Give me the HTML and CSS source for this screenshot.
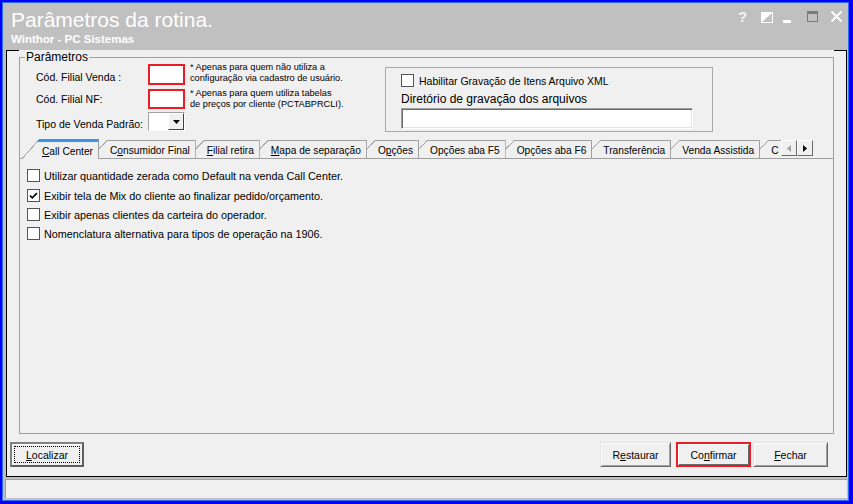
FILE: index.html
```html
<!DOCTYPE html>
<html lang="pt-BR">
<head>
  <meta charset="UTF-8" />
  <title>Parâmetros da rotina</title>
  <link rel="stylesheet" href="styles.css">
</head>
<body>

<div class="window">

  <!-- Barra de título -->
  <div class="titlebar">
    <div class="titles">
      <div class="title">Parâmetros da rotina.</div>
      <div class="subtitle">Winthor - PC Sistemas</div>
    </div>
    <div class="winbtns">
      <span class="wb help">?</span>
      <svg class="wb skin" width="12" height="11" viewBox="0 0 12 11"><rect x="0.5" y="0.5" width="11" height="10" fill="none" stroke="#fff"/><polygon points="1,1 11,1 1,10" fill="#fff"/></svg>
      <svg class="wb min" width="9" height="11" viewBox="0 0 9 11"><rect x="0" y="8" width="8" height="3" fill="#fff"/></svg>
      <svg class="wb max" width="11" height="11" viewBox="0 0 11 11"><rect x="0.5" y="0.5" width="10" height="10" fill="none" stroke="#7a7a7a"/><rect x="0" y="0" width="11" height="3" fill="#7a7a7a"/></svg>
      <svg class="wb close" width="13" height="11" viewBox="0 0 13 11"><path d="M1.5 0.5 L11.5 10.5 M11.5 0.5 L1.5 10.5" stroke="#fff" stroke-width="2"/></svg>
    </div>
  </div>

  <!-- Painel principal -->
  <div class="panel">
    <div class="groupwrap">
      <fieldset class="group">
        <legend>Parâmetros</legend>

        <div class="top">
          <div class="fields">
            <div class="row r1">
              <span class="lbl">Cód. Filial Venda :</span>
              <span class="redbox"></span>
              <span class="note n1">* Apenas para quem não utiliza a<br>configuração via cadastro de usuário.</span>
            </div>
            <div class="row r2">
              <span class="lbl">Cód. Filial NF:</span>
              <span class="redbox"></span>
              <span class="note n2">* Apenas para quem utiliza tabelas<br>de preços por cliente (PCTABPRCLI).</span>
            </div>
            <div class="row r3">
              <span class="lbl">Tipo de Venda Padrão:</span>
              <span class="combo">
                <span class="combo-btn">
                  <svg width="7" height="4" viewBox="0 0 7 4"><polygon points="0,0 7,0 3.5,4" fill="#000"/></svg>
                </span>
              </span>
            </div>
          </div>

          <div class="xmlbox">
            <div class="xml-chk"><span class="chk"></span>Habilitar Gravação de Itens Arquivo XML</div>
            <div class="dir-lbl">Diretório de gravação dos arquivos</div>
            <div class="textbox"></div>
          </div>
        </div>

        <!-- Abas -->
        <div class="tabstrip">
          <div class="tabs">
            <span class="tab active"><u>C</u>all Center</span>
            <span class="tab">C<u>o</u>nsumidor Final</span>
            <span class="tab"><u>F</u>ilial retira</span>
            <span class="tab"><u>M</u>apa de separação</span>
            <span class="tab">O<u>p</u>ções</span>
            <span class="tab">Opções aba F5</span>
            <span class="tab">Opções aba F6</span>
            <span class="tab">Transferência</span>
            <span class="tab">Venda Assistida</span>
            <span class="tab">C</span>
          </div>
          <div class="scroller">
            <span class="sbtn"><svg width="4" height="7" viewBox="0 0 4 7"><polygon points="4,0 4,7 0,3.5" fill="#a0a0a0"/></svg></span>
            <span class="sbtn"><svg width="4" height="7" viewBox="0 0 4 7"><polygon points="0,0 0,7 4,3.5" fill="#000"/></svg></span>
          </div>
        </div>

        <div class="tabpage">
          <div class="chk-row"><span class="chk"></span>Utilizar quantidade zerada como Default na venda Call Center.</div>
          <div class="chk-row"><span class="chk checked"><svg width="11" height="11" viewBox="0 0 11 11"><path d="M2 5.5 L4.3 7.8 L9 3" fill="none" stroke="#000" stroke-width="1.7"/></svg></span>Exibir tela de Mix do cliente ao finalizar pedido/orçamento.</div>
          <div class="chk-row"><span class="chk"></span>Exibir apenas clientes da carteira do operador.</div>
          <div class="chk-row"><span class="chk"></span>Nomenclatura alternativa para tipos de operação na 1906.</div>
        </div>
      </fieldset>
    </div>

    <!-- Botões -->
    <div class="actions">
      <button class="btn btn-default"><span class="focus"><u>L</u>ocalizar</span></button>
      <div class="actions-right">
        <button class="btn btn-restaurar">R<u>e</u>staurar</button>
        <button class="btn btn-confirmar">Co<u>n</u>firmar</button>
        <button class="btn btn-fechar"><u>F</u>echar</button>
      </div>
    </div>
  </div>

  <div class="statusbar"></div>
</div>

</body>
</html>
```

FILE: styles.css
```css
html, body {
  margin: 0;
  padding: 0;
  width: 853px;
  height: 504px;
  overflow: hidden;
  font-family: "Liberation Sans", Arial, sans-serif;
  font-size: 10.5px;
  color: #000;
  background: #c0c0c0;
}

.window {
  width: 853px;
  height: 504px;
  box-sizing: border-box;
  border-style: solid;
  border-color: #0000f6;
  border-width: 2px 4px 3px 2px;
  background: #c0c0c0;
  box-shadow: inset 1px 1px 0 #2f6cff, inset -1px -1px 0 #2f6cff;
  display: flex;
  flex-direction: column;
}

/* Barra de título */
.titlebar {
  height: 48px;
  flex: none;
  display: flex;
  justify-content: space-between;
  padding: 0 6px 0 9px;
  color: #fff;
}

.titles {
  padding-top: 6px;
}

.title {
  font-size: 21px;
  line-height: 24px;
}

.subtitle {
  font-weight: bold;
  font-size: 11.5px;
  line-height: 14px;
}

.winbtns {
  display: flex;
  align-items: flex-start;
  padding-top: 9px;
}

.wb {
  display: block;
}

.help {
  font-weight: bold;
  font-size: 15px;
  line-height: 12px;
  width: 9px;
  color: #f4f4f4;
}

.skin { margin-left: 14px; margin-top: 1px; }
.min { margin-left: 10px; margin-top: 1px; }
.max { margin-left: 15px; }
.close { margin-left: 12px; }

/* Painel */
.panel {
  flex: none;
  height: 427px;
  box-sizing: border-box;
  margin: 0 2px 0 4px;
  border: 1px solid #000;
  background: #f0f0f0;
}

.groupwrap {
  margin: -1px 12px 0 12px;
  background: #f0f0f0;
}

.group {
  margin: 0;
  padding: 0;
  min-width: 0;
  border: 1px solid #a0a0a0;
}

.group legend {
  margin-left: 5px;
  padding: 0 1px;
  font-size: 12px;
  line-height: 14px;
}

.top {
  height: 68px;
  display: flex;
  padding-left: 16px;
}

.fields {
  width: 349px;
  flex: none;
}

.row {
  display: flex;
  align-items: center;
}

.r1 { height: 21px; }
.r2 { height: 20px; margin-top: 4px; }
.r3 { height: 19px; margin-top: 3px; }

.lbl {
  width: 112px;
  flex: none;
  line-height: 13px;
}

.r1 .lbl { padding-top: 6px; }
.r3 .lbl { padding-top: 5px; }

.redbox {
  width: 37px;
  height: 100%;
  box-sizing: border-box;
  border: 2px solid #ec1c24;
  background: #fff;
  flex: none;
}

.note {
  align-self: flex-start;
  margin-left: 5px;
  font-size: 9.2px;
  line-height: 11px;
  white-space: nowrap;
}

.n1 { margin-top: -2px; }
.n2 { margin-top: -1px; }

.combo {
  width: 37px;
  height: 19px;
  box-sizing: border-box;
  border: 1px solid;
  border-color: #a0a0a0 #fff #fff #a0a0a0;
  background: #fff;
  display: flex;
  justify-content: flex-end;
}

.combo-btn {
  width: 16px;
  box-sizing: border-box;
  border: 1px solid;
  border-color: #fff #404040 #404040 #fff;
  background: #f0f0f0;
  display: flex;
  align-items: center;
  justify-content: center;
}

.combo-btn svg { display: block; }

.xmlbox {
  margin: 3px 0 0 0;
  width: 328px;
  height: 65px;
  box-sizing: border-box;
  border: 1px solid #a9a9a9;
  padding: 6px 0 0 15px;
}

.xml-chk {
  display: flex;
  align-items: center;
  height: 13px;
}

.xml-chk .chk { margin-right: 5px; }

.dir-lbl {
  margin-top: 5px;
  font-size: 12px;
  line-height: 14px;
}

.textbox {
  margin-top: 2px;
  width: 292px;
  height: 21px;
  box-sizing: border-box;
  border: 1px solid;
  border-color: #a0a0a0 #fff #fff #a0a0a0;
  box-shadow: inset 1px 1px 0 #696969, inset -1px -1px 0 #e3e3e3;
  background: #fff;
}

/* Abas */
.tabstrip {
  margin-top: 7px;
  height: 20px;
  display: flex;
  background: linear-gradient(#a0a0a0, #a0a0a0) 0 19px / 100% 1px no-repeat;
}

.tabs {
  width: 761px;
  height: 20px;
  flex: none;
  display: flex;
  align-items: flex-end;
  overflow: hidden;
  font-size: 10.2px;
}

.tab {
  position: relative;
  flex: none;
  height: 18px;
  box-sizing: border-box;
  margin: 0 0 1px -10px;
  padding: 3px 5px 0 21px;
  border-top: 1px solid #a0a0a0;
  border-right: 1px solid #a0a0a0;
  line-height: 13px;
  white-space: nowrap;
  background: linear-gradient(to bottom right, transparent 50%, #a0a0a0 50%, #a0a0a0 calc(50% + 1px), #f0f0f0 calc(50% + 1px)) 0 0 / 18px 18px no-repeat border-box, #f0f0f0;
  clip-path: polygon(0 100%, 18px 0, 100% 0, 100% 100%);
}

.tab:nth-child(2) { z-index: 9; }
.tab:nth-child(3) { z-index: 8; }
.tab:nth-child(4) { z-index: 7; }
.tab:nth-child(5) { z-index: 6; }
.tab:nth-child(6) { z-index: 5; }
.tab:nth-child(7) { z-index: 4; }
.tab:nth-child(8) { z-index: 3; }
.tab:nth-child(9) { z-index: 2; }
.tab:nth-child(10) { z-index: 1; }

.tab.active {
  z-index: 10;
  height: 20px;
  margin: 0 0 0 1px;
  padding-top: 3px;
  border-top: 3px solid #3c94ee;
  background: linear-gradient(to bottom right, transparent 50%, #a0a0a0 50%, #a0a0a0 calc(50% + 1px), #f0f0f0 calc(50% + 1px)) 0 0 / 18px 20px no-repeat border-box, #f0f0f0;
}

.scroller {
  display: flex;
  align-self: flex-start;
  margin-top: 1px;
}

.sbtn {
  width: 16px;
  height: 16px;
  box-sizing: border-box;
  border: 1px solid;
  border-color: #fff #696969 #696969 #fff;
  background: #f0f0f0;
  display: flex;
  align-items: center;
  justify-content: center;
}

.sbtn svg { display: block; }

.tabpage {
  height: 274px;
  box-sizing: border-box;
  padding: 10px 0 0 7px;
  font-size: 10.8px;
}

.chk-row {
  display: flex;
  align-items: center;
  height: 13px;
  margin-bottom: 6px;
}

.chk-row:first-child { margin-bottom: 7px; }

.chk-row .chk { margin-right: 4px; }

.chk {
  width: 13px;
  height: 13px;
  box-sizing: border-box;
  border: 1px solid #555;
  background: #fff;
  flex: none;
  display: flex;
  align-items: center;
  justify-content: center;
}

.chk svg { display: block; }

/* Botões */
.actions {
  margin-top: 8px;
  display: flex;
  justify-content: space-between;
  padding: 0 18px 0 3px;
}

.actions-right {
  display: flex;
}

.btn {
  height: 25px;
  box-sizing: border-box;
  margin: 0;
  padding: 0;
  font-family: "Liberation Sans", Arial, sans-serif;
  font-size: 10.5px;
  color: #000;
  background: #f0f0f0;
  border: 1px solid;
  border-color: #e3e3e3 #696969 #696969 #e3e3e3;
  box-shadow: inset 1px 1px 0 #fff, inset -1px -1px 0 #a0a0a0;
  display: flex;
  align-items: center;
  justify-content: center;
}

.btn-default {
  width: 74px;
  border: 2px solid #808080;
  border-right-color: #5e5e5e;
  border-bottom-color: #5e5e5e;
  box-shadow: inset 1px 1px 0 #fff;
  padding: 2px;
}

.focus {
  flex: 1;
  align-self: stretch;
  border: 1px dotted #000;
  display: flex;
  align-items: center;
  justify-content: center;
}

.btn-restaurar { width: 71px; margin-right: 5px; }

.btn-confirmar {
  width: 75px;
  margin-right: 2px;
  border: 2px solid #ec1c24;
  box-shadow: inset 1px 1px 0 #fff, inset -1px -1px 0 #696969;
}

.btn-fechar { width: 75px; }

/* Barra de status */
.statusbar {
  flex: none;
  height: 19px;
  box-sizing: border-box;
  margin: 2px 2px 0 3px;
  border-top: 1px solid #a0a0a0;
  border-left: 1px solid #a0a0a0;
  background: #f0f0f0;
}
```
